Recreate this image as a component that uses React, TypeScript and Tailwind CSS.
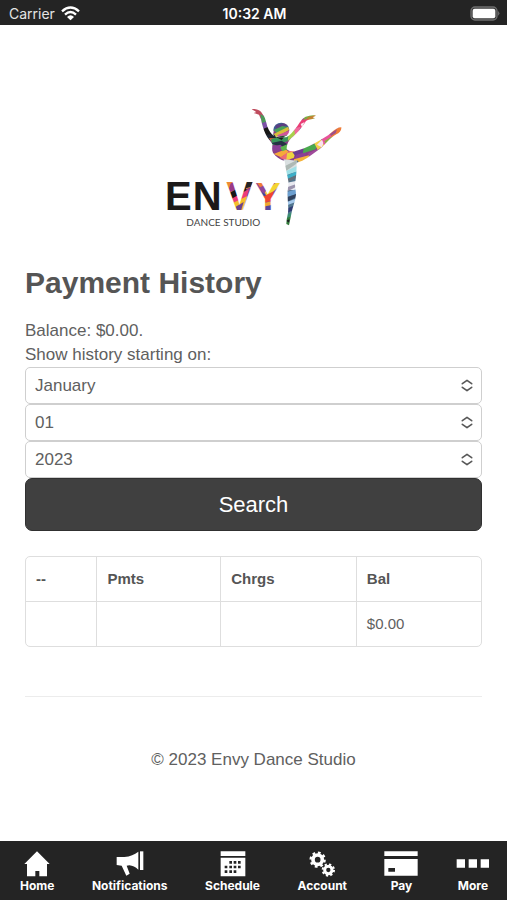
import { useState } from "react";

const MONTHS = [
  "January",
  "February",
  "March",
  "April",
  "May",
  "June",
  "July",
  "August",
  "September",
  "October",
  "November",
  "December",
];
const DAYS = [...Array(31)].map((_, i) => String(i + 1).padStart(2, "0"));
const YEARS = ["2023", "2022", "2021", "2020"];

const StatusBar = () => (
  <div className="grid h-[25px] grid-cols-3 items-center bg-[#242424] pl-[9px] pr-[7px] pt-[2px] font-['Inter',sans-serif] text-[14px] leading-5 text-[#e4e4e4]">
    <div className="flex items-center gap-[6px]">
      <span>Carrier</span>
      <svg width="19" height="15" viewBox="0 0 57 45" fill="none" stroke="#fff" strokeWidth="7" aria-hidden="true">
        <path d="M3 16 Q28.500 -7 54 16" />
        <path d="M12 26 Q28.500 10 45 26" />
        <path d="M28.500 43 L18 33 Q28.500 23 39 33 Z" fill="#fff" stroke="none" />
      </svg>
    </div>
    <span className="text-center font-semibold text-white">10:32 AM</span>
    <svg className="justify-self-end" width="30" height="15" viewBox="0 0 90 45" aria-hidden="true">
      <rect x="3" y="3" width="78" height="39" rx="12" fill="#3a3a3a" stroke="#6e6e6e" strokeWidth="4" />
      <rect x="8" y="8" width="68" height="29" rx="6" fill="#fff" />
      <path d="M85 15 Q91 22 85 29Z" fill="#858585" />
    </svg>
  </div>
);

// Paint strokes shared by the dancer and the last two letters
const Paint = () => (
  <>
    <rect width="570" height="405" fill="#8a3f86" />
    {/* letters */}
    <path d="M195 238h90v20l-90 35z" fill="#ee8a35" />
    <path d="M215 250l30-10-8 26-32 14z" fill="#9b3a86" />
    <path d="M200 285l55-30 8 14-50 38z" fill="#171717" />
    <path d="M250 240h34l-8 20-32 10z" fill="#252525" />
    <path d="M215 298l55-30-8 24-34 16z" fill="#ee3c79" />
    <path d="M215 312l50-24-14 45h-30z" fill="#f4bd2d" />
    <path d="M230 320l24-14-8 26h-12z" fill="#6c438d" />
    <path d="M289 240h84l-25 55-59-5z" fill="#8f4798" />
    <path d="M289 240l22 0 8 14-16 8z" fill="#ef7d38" />
    <path d="M318 276l42-36 14 8-52 44z" fill="#f3d433" />
    <path d="M289 262l36 26-6 14-30-22z" fill="#2d4fa2" />
    <path d="M304 294l40-20-6 28-30 8z" fill="#ef4533" />
    <path d="M304 312l38-10v14l-38 10z" fill="#f0a42e" />
    <path d="M304 322l38-8v20h-38z" fill="#59479a" />
    {/* arms */}
    <path d="M275 20l34 5 4 30-35-12z" fill="#bf4c5e" />
    <path d="M304 42l14 8 8 25-16 6z" fill="#4b9a59" />
    <path d="M308 70l16-6 5 20-14 6z" fill="#7a51a5" />
    <path d="M310 88l18-8 10 20-10 18z" fill="#161616" />
    <path d="M320 104l26-3 10 18-30 2z" fill="#1d2430" />
    <path d="M330 115l22 0-10 14z" fill="#f07138" />
    <path d="M440 42h35v15l-44 7z" fill="#7aac44" />
    <path d="M446 52l26-8-4 10-28 10z" fill="#c5812f" />
    <path d="M420 60l28-2-16 26-20 0z" fill="#ea3d76" />
    <path d="M425 72l12-6-8 16z" fill="#fbe9f1" />
    <path d="M395 88l30-8-10 24-24 10z" fill="#f06a9a" />
    <path d="M384 100l22-10 2 14-22 20z" fill="#a7d14b" />
    {/* head */}
    <path d="M342 66h50v20l-50 8z" fill="#3c5f92" />
    <path d="M350 75l36-8 4 8-40 14z" fill="#5b3f82" />
    <path d="M344 90l26-12 18 4-34 18z" fill="#4aa159" />
    <path d="M344 102l44-22 2 10-38 22z" fill="#d9be3a" />
    <path d="M354 106l36-14v12l-26 10z" fill="#d0559b" />
    {/* torso */}
    <path d="M336 118l30-10 22-2-2 18-46 12z" fill="#39975a" />
    <path d="M352 112l26-4-10 12z" fill="#1c1c1c" />
    <path d="M334 130l34-8 20 12-20 8z" fill="#253244" />
    <path d="M336 140l28-6 16 14-38 6z" fill="#8a3f96" />
    <path d="M344 162l36-14 10 8-24 16z" fill="#f6a93a" />
    <path d="M364 142l22-10v16l-16 6z" fill="#5cb54e" />
    <path d="M362 174l34-24 18 6-24 26z" fill="#ef6a76" />
    <path d="M384 160l28-8-8 22-22 6z" fill="#ecd53f" />
    {/* raised leg */}
    <path d="M400 156l40-12 4 12-34 14z" fill="#6b3d92" />
    <path d="M412 164l30-8-4 14-30 10z" fill="#8a3f96" />
    <path d="M405 178l50-14-20 22-30 6z" fill="#f5b33b" />
    <path d="M434 144l40-16-4 20-38 12z" fill="#4aa94e" />
    <path d="M448 160l34-16-12 18-20 8z" fill="#a04a9b" />
    <path d="M464 126l20-10 12 20-20 14z" fill="#f4cf48" />
    <path d="M474 134l20-20 6 2-12 26z" fill="#fbe3ee" />
    <path d="M486 112l22-12 14 10-26 26z" fill="#e7549a" />
    <path d="M496 124l30-20-4 14-22 14z" fill="#8cae43" />
    <path d="M512 96l40-20-2 26-30 14z" fill="#ef7d38" />
    <path d="M514 100l20-12-4 12-14 8z" fill="#9f4f88" />
    {/* standing leg */}
    <path d="M368 182l50 0 2 220h-50z" fill="#51758f" />
    <path d="M374 178l40 4 2 34-40 4z" fill="#d9dfe0" />
    <path d="M378 198l36-18v10l-34 24z" fill="#aeb9b5" />
    <path d="M380 214l34-16v16l-32 12z" fill="#9fe0e6" />
    <path d="M380 228l34-14v10l-30 16z" fill="#3dafc8" />
    <path d="M382 238l32-14v10l-30 14z" fill="#63707c" />
    <path d="M384 248l30-6v28h-30z" fill="#e8e9f0" />
    <path d="M384 262l28-10v8l-26 14z" fill="#9a93ad" />
    <path d="M384 276l28-8v14l-26 8z" fill="#6c9fd0" />
    <path d="M384 292l28-10v10l-28 14z" fill="#30415e" />
    <path d="M384 306l26-10v10l-26 10z" fill="#a5c9ec" />
    <path d="M382 326l26-10v12l-26 12z" fill="#2f3c73" />
    <path d="M380 344l22-8v16l-22 8z" fill="#3c8c75" />
    <path d="M378 356l20-8v28h-20z" fill="#347d3d" />
    <path d="M381 362l10-4v10z" fill="#1b1e20" />
  </>
);

const Logo = () => (
  <svg width="190" height="135" viewBox="0 0 570 405" role="img" aria-label="Envy Dance Studio">
    <defs>
      <pattern id="paint" width="570" height="405" patternUnits="userSpaceOnUse">
        <Paint />
      </pattern>
    </defs>
    <g className="font-['Liberation_Sans',Arial,sans-serif] font-bold" fontSize="120" fill="#1b1919">
      <text x="18" y="330">E</text>
      <text x="101" y="330">N</text>
      <text x="202" y="330" fill="url(#paint)">V</text>
      <text x="289" y="330" fontSize="114" fill="url(#paint)">Y</text>
    </g>
    <text x="82" y="377" className="font-['Lato',sans-serif]" fontSize="30" fill="#444">
      DANCE STUDIO
    </text>
    <g fill="url(#paint)">
      <path d="M278 28 C288 25 298 29 306 35 L311 43 C317 50 319 58 322 68 C325 84 332 96 342 106 C348 110 355 112 360 112 L382 112 C394 106 403 93 413 81 C421 70 427 57 440 50 C451 48 459 44 471 47 L461 52 L468 55 C457 59 448 59 441 63 C435 73 427 83 419 93 C410 104 398 112 391 121 C385 130 383 139 383 147 C388 153 396 154 407 154 C427 149 448 141 467 130 C487 119 505 109 518 97 C528 88 537 82 547 82 C548 91 541 98 532 103 C512 114 500 134 482 147 C465 159 450 172 430 182 L413 188 C413 208 412 229 409 246 C406 257 411 270 411 284 C409 304 400 323 397 342 L394 357 L390 376 L382 372 L383 359 L387 338 C389 319 386 306 386 290 C384 273 389 258 388 244 C385 223 379 204 377 183 C363 178 349 170 342 158 C337 148 341 139 340 132 C333 121 326 115 320 103 C313 88 309 74 306 58 L300 44 L284 39 L292 36 Z" />
      <ellipse cx="367" cy="90" rx="24" ry="22" />
      <circle cx="352" cy="101" r="9" />
    </g>
  </svg>
);

type SelectProps = {
  id: string;
  label?: string;
  value: string;
  options: string[];
  onChange: (value: string) => void;
};

const Select = ({ id, label, value, options, onChange }: SelectProps) => (
  <div className="relative">
    <select
      id={id}
      aria-label={label}
      value={value}
      onChange={(e) => onChange(e.target.value)}
      className="block h-[37px] w-full appearance-none rounded-[5px] border border-[#cfcfcf] bg-white px-[9px] text-[17px] leading-6 text-[#606060]"
    >
      {options.map((o) => (
        <option key={o}>{o}</option>
      ))}
    </select>
    <svg
      className="pointer-events-none absolute right-[9px] top-3 h-[13px] w-3"
      viewBox="0 0 36 39"
      fill="none"
      stroke="#585858"
      strokeWidth="5"
      strokeLinecap="round"
      strokeLinejoin="round"
      aria-hidden="true"
    >
      <path d="M4 14 L18 4 L32 14 M4 25 L18 35 L32 25" />
    </svg>
  </div>
);

const NAV = [
  {
    name: "Home",
    icon: (
      <svg width="26" height="26" viewBox="0 0 78 78" fill="#fff">
        <path d="M39 1 L77 39 H69 V76 H46 V60 H34 V76 H9 V39 H1 Z" />
      </svg>
    ),
  },
  {
    name: "Notifications",
    icon: (
      <svg width="28" height="26" viewBox="0 0 84 78" fill="#fff">
        <path d="M2 18 H25 C43 17 55 10 67 2 V56 C58 48 50 44 40 43 L32 44 L41 68 L31 74 L17 44 L2 42 Z" />
        <path d="M72 1 H82 V57 H72 Z" />
      </svg>
    ),
  },
  {
    name: "Schedule",
    icon: (
      <svg width="26" height="26" viewBox="0 0 78 78">
        <path d="M2 1 H76 V15 H2 Z M2 20 H76 V76 H2 Z" fill="#fff" />
        <path
          d="M28 30h8v8h-8z M41 30h8v8h-8z M54 30h8v8h-8z M14 44h8v8h-8z M28 44h8v8h-8z M41 44h8v8h-8z M54 44h8v8h-8z M14 58h8v8h-8z M28 58h8v8h-8z M41 58h8v8h-8z"
          fill="#242424"
        />
      </svg>
    ),
  },
  {
    name: "Account",
    icon: (
      <svg width="26" height="26" viewBox="0 0 78 78" fill="none" stroke="#fff">
        <circle cx="26" cy="26" r="14" strokeWidth="11" />
        <circle cx="26" cy="26" r="21" strokeWidth="7" strokeDasharray="8.25 8.25" />
        <circle cx="58" cy="57" r="11" strokeWidth="9" />
        <circle cx="58" cy="57" r="17" strokeWidth="6" strokeDasharray="6.68 6.68" />
      </svg>
    ),
  },
  {
    name: "Pay",
    icon: (
      <svg width="34" height="26" viewBox="0 0 102 78" fill="#fff">
        <path d="M1 1 H101 V15 H1 Z" />
        <path fillRule="evenodd" d="M1 24 H101 V74 H1 Z M13 51 V62 H33 V51 Z" />
      </svg>
    ),
  },
  {
    name: "More",
    icon: (
      <svg width="34" height="26" viewBox="0 0 102 78" fill="#fff">
        <path d="M2 25h25v25h-25z M38 25h25v25h-25z M74 25h25v25h-25z" />
      </svg>
    ),
  },
];

const TabBar = () => (
  <nav className="flex h-[59px] items-start justify-between bg-[#242424] pl-5 pr-[17px] pt-[10px] font-['Inter',sans-serif] text-[12px] font-bold leading-[18px] text-white">
    {NAV.map((item) => (
      <a key={item.name} href="#" className="flex flex-col items-center">
        {item.icon}
        <span>{item.name}</span>
      </a>
    ))}
  </nav>
);

export default function App() {
  const [month, setMonth] = useState("January");
  const [day, setDay] = useState("01");
  const [year, setYear] = useState("2023");

  return (
    <div className="flex min-h-screen flex-col bg-white font-['Liberation_Sans',Arial,sans-serif] text-[17px] leading-6 text-[#606060]">
      <StatusBar />

      <main className="flex-1 px-[25px] pt-[75px]">
        <div className="flex justify-center">
          <Logo />
        </div>

        <h1 className="mt-7 text-[30px] font-bold leading-10 text-[#555]">Payment History</h1>

        <form className="mt-4" onSubmit={(e) => e.preventDefault()}>
          <p>Balance: $0.00.</p>
          <label htmlFor="month" className="block">
            Show history starting on:
          </label>
          <Select id="month" value={month} options={MONTHS} onChange={setMonth} />
          <Select id="day" label="Day" value={day} options={DAYS} onChange={setDay} />
          <Select id="year" label="Year" value={year} options={YEARS} onChange={setYear} />
          <button
            type="submit"
            className="h-[53px] w-full rounded-[7px] border border-[#303030] bg-[#404040] text-[22px] text-white"
          >
            Search
          </button>
        </form>

        {/* History table */}
        <div className="mt-[25px] overflow-hidden rounded-[5px] border border-[#dedede]">
          <table className="w-full table-fixed text-left text-[15px]">
            <colgroup>
              <col className="w-[15.6%]" />
              <col className="w-[27.2%]" />
              <col className="w-[29.8%]" />
              <col />
            </colgroup>
            <thead>
              <tr className="h-11 divide-x divide-[#dedede] border-b border-[#dedede] text-[#555]">
                <th className="px-[10px]">--</th>
                <th className="px-[10px]">Pmts</th>
                <th className="px-[10px]">Chrgs</th>
                <th className="px-[10px]">Bal</th>
              </tr>
            </thead>
            <tbody>
              <tr className="h-[45px] divide-x divide-[#dedede]">
                <td className="px-[10px]" />
                <td className="px-[10px]" />
                <td className="px-[10px]" />
                <td className="px-[10px]">$0.00</td>
              </tr>
            </tbody>
          </table>
        </div>

        <hr className="mt-[49px] border-[#ececec]" />
        <footer className="mt-[51px] text-center">© 2023 Envy Dance Studio</footer>
      </main>

      <TabBar />
    </div>
  );
}
